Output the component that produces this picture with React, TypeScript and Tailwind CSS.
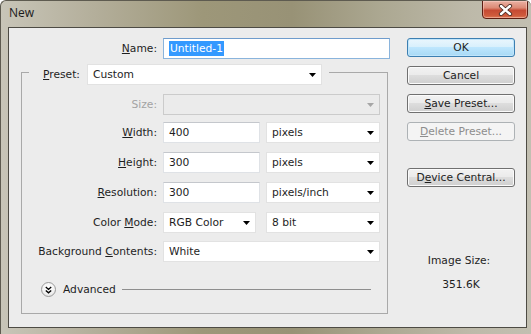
import React from "react";

function Arrow({ disabled }: { disabled?: boolean }) {
  return (
    <svg width="7" height="4" viewBox="0 0 7 4" className="shrink-0">
      <path d="M0 0H7L3.5 4Z" fill={disabled ? "#a6a6a6" : "#000"} />
    </svg>
  );
}

function Select({ className, text, disabled }: { className: string; text?: string; disabled?: boolean }) {
  return (
    <div
      className={
        "h-[21px] flex items-center justify-between pl-[5px] pr-[5px] border " +
        (disabled ? "bg-[#ebebeb] border-[#cbcbcb] " : "bg-white border-[#e2e2e2] ") +
        className
      }
    >
      <span className="leading-[14px]">{text}</span>
      <Arrow disabled={disabled} />
    </div>
  );
}

function Input({ className, text }: { className: string; text: string }) {
  return (
    <div
      className={
        "h-[21px] flex items-center pl-[5px] bg-white border border-[#dfe2e6] border-t-[#c4c7cc] " + className
      }
    >
      <span className="leading-[14px]">{text}</span>
    </div>
  );
}

function Label({ children, gray }: { children: React.ReactNode; gray?: boolean }) {
  return (
    <div className={"w-[135px] text-right leading-[14px] " + (gray ? "text-[#a3a3a3]" : "text-[#1e1e1e]")}>
      {children}
    </div>
  );
}

function Btn({ children, primary, disabled }: { children: React.ReactNode; primary?: boolean; disabled?: boolean }) {
  let cls =
    "w-[108px] h-[19px] rounded-[3px] border flex items-center justify-center leading-[14px] ";
  if (primary)
    cls +=
      "border-[#3c7fb1] bg-[linear-gradient(#eaf6fd_0%,#d9f0fc_45%,#bee6fd_50%,#a7d9f5_100%)] text-[#1e1e1e] shadow-[inset_0_0_0_1px_#c0e5fb]";
  else if (disabled)
    cls += "border-[#adb2b5] bg-[#f4f4f4] text-[#8d8d8d]";
  else
    cls +=
      "border-[#707070] bg-[linear-gradient(#f2f2f2_0%,#ebebeb_45%,#dddddd_50%,#cfcfcf_100%)] text-[#1e1e1e] shadow-[inset_0_0_0_1px_#fbfbfb]";
  return <div className={cls}>{children}</div>;
}

export default function App() {
  return (
    <div className="w-[531px] h-[334px] overflow-hidden flex flex-col bg-[linear-gradient(90deg,#c8c5b8_0%,#b3ae9a_18%,#9d9779_38%,#989276_55%,#aca892_72%,#bdb9a9_88%,#c2bfb1_100%)] font-['DejaVu_Sans',sans-serif] text-[10.7px] text-[#1e1e1e] rounded-t-[6px] border-l border-t border-[#5e5b50]">
      <div className="h-[26px] flex justify-between shrink-0 relative">
        <div className="pl-[8px] pt-[4px] font-['Open_Sans',sans-serif] text-[12px] leading-[16px] text-[#1a1a1a]">New</div>
        <div className="mr-[3px] -mt-px w-[46px] h-[19px] rounded-b-[4px] border border-[#5d1d12] bg-[linear-gradient(#eab1a3_0%,#dc8a76_40%,#c64a33_55%,#cf5a3c_85%,#e07a55_100%)] flex items-center justify-center shadow-[inset_0_0_0_1px_rgba(255,220,210,0.45)]">
          <svg width="15" height="12" viewBox="0 0 15 12">
            <path d="M3 2L12 10M12 2L3 10" stroke="#4a2a22" strokeWidth="4.2" strokeLinecap="round" />
            <path d="M3 2L12 10M12 2L3 10" stroke="#ffffff" strokeWidth="2.4" strokeLinecap="round" />
          </svg>
        </div>
      </div>
      <div className="ml-[7px] w-[519px] h-[301px] shrink-0 bg-[#ececec] border border-[#4d4b44] flex">
        {/* left column */}
        <div className="w-[381px] flex flex-col pt-[10px]">
          <div className="flex items-center gap-[6px]">
            <div className="w-[148px] text-right leading-[14px]">
              <u>N</u>ame:
            </div>
            <div className="w-[227px] h-[21px] flex items-center pl-[5px] bg-white border border-[#8ab4dc] border-t-[#6f9ccc]">
              <span className="bg-[#3399ff] text-white leading-[15px] px-px">Untitled-1</span>
            </div>
          </div>
          <div className="ml-[12px] mt-[13px] w-[367px] h-[242px] border border-[#a9a9a9] flex flex-col">
            <div className="-mt-[9px] ml-[7px] self-start bg-[#ececec] pl-[14px] pr-[7px] flex items-center">
              <div className="w-[44px] leading-[14px]">
                <u>P</u>reset:
              </div>
              <Select className="w-[235px]" text="Custom" />
            </div>
            <div className="mt-[9px] flex items-center gap-[6px]">
              <Label gray>Size:</Label>
              <Select className="w-[217px]" disabled />
            </div>
            <div className="mt-[7px] flex items-center gap-[6px]">
              <Label>
                <u>W</u>idth:
              </Label>
              <Input className="w-[97px]" text="400" />
              <Select className="w-[114px]" text="pixels" />
            </div>
            <div className="mt-[9px] flex items-center gap-[6px]">
              <Label>
                <u>H</u>eight:
              </Label>
              <Input className="w-[97px]" text="300" />
              <Select className="w-[114px]" text="pixels" />
            </div>
            <div className="mt-[9px] flex items-center gap-[6px]">
              <Label>
                <u>R</u>esolution:
              </Label>
              <Input className="w-[97px]" text="300" />
              <Select className="w-[114px]" text="pixels/inch" />
            </div>
            <div className="mt-[9px] flex items-center gap-[6px]">
              <Label>
                Color <u>M</u>ode:
              </Label>
              <Select className="w-[93px]" text="RGB Color" />
              <Select className="w-[114px] ml-[4px]" text="8 bit" />
            </div>
            <div className="mt-[8px] flex items-center gap-[6px]">
              <Label>
                Background <u>C</u>ontents:
              </Label>
              <Select className="w-[217px]" text="White" />
            </div>
            <div className="mt-[20px] ml-[19px] flex items-center">
              <div className="w-[15px] h-[15px] rounded-full border border-[#9a9a9a] bg-[radial-gradient(circle_at_50%_35%,#ffffff_0%,#f3f3f3_55%,#d6d6d6_100%)] flex items-center justify-center">
                <svg width="7" height="8" viewBox="0 0 7 8">
                  <path d="M0.8 1L3.5 3.4L6.2 1M0.8 4.4L3.5 6.8L6.2 4.4" stroke="#000" strokeWidth="1.4" fill="none" />
                </svg>
              </div>
              <div className="ml-[7px] leading-[14px]">Advanced</div>
              <div className="ml-[6px] w-[249px] h-px bg-[#8e8e8e]" />
            </div>
          </div>
        </div>
        {/* right column */}
        <div className="ml-[17px] w-[108px] flex flex-col pt-[10px]">
          <Btn primary>OK</Btn>
          <div className="mt-[9px]">
            <Btn>Cancel</Btn>
          </div>
          <div className="mt-[9px]">
            <Btn>
              <span>
                <u>S</u>ave Preset...
              </span>
            </Btn>
          </div>
          <div className="mt-[9px]">
            <Btn disabled>
              <span>
                <u>D</u>elete Preset...
              </span>
            </Btn>
          </div>
          <div className="mt-[27px]">
            <Btn>
              <span>
                D<u>e</u>vice Central...
              </span>
            </Btn>
          </div>
          <div className="mt-[67px] text-center leading-[14px] pr-[4px]">Image Size:</div>
          <div className="mt-[10px] text-center leading-[14px]">351.6K</div>
        </div>
      </div>
    </div>
  );
}
